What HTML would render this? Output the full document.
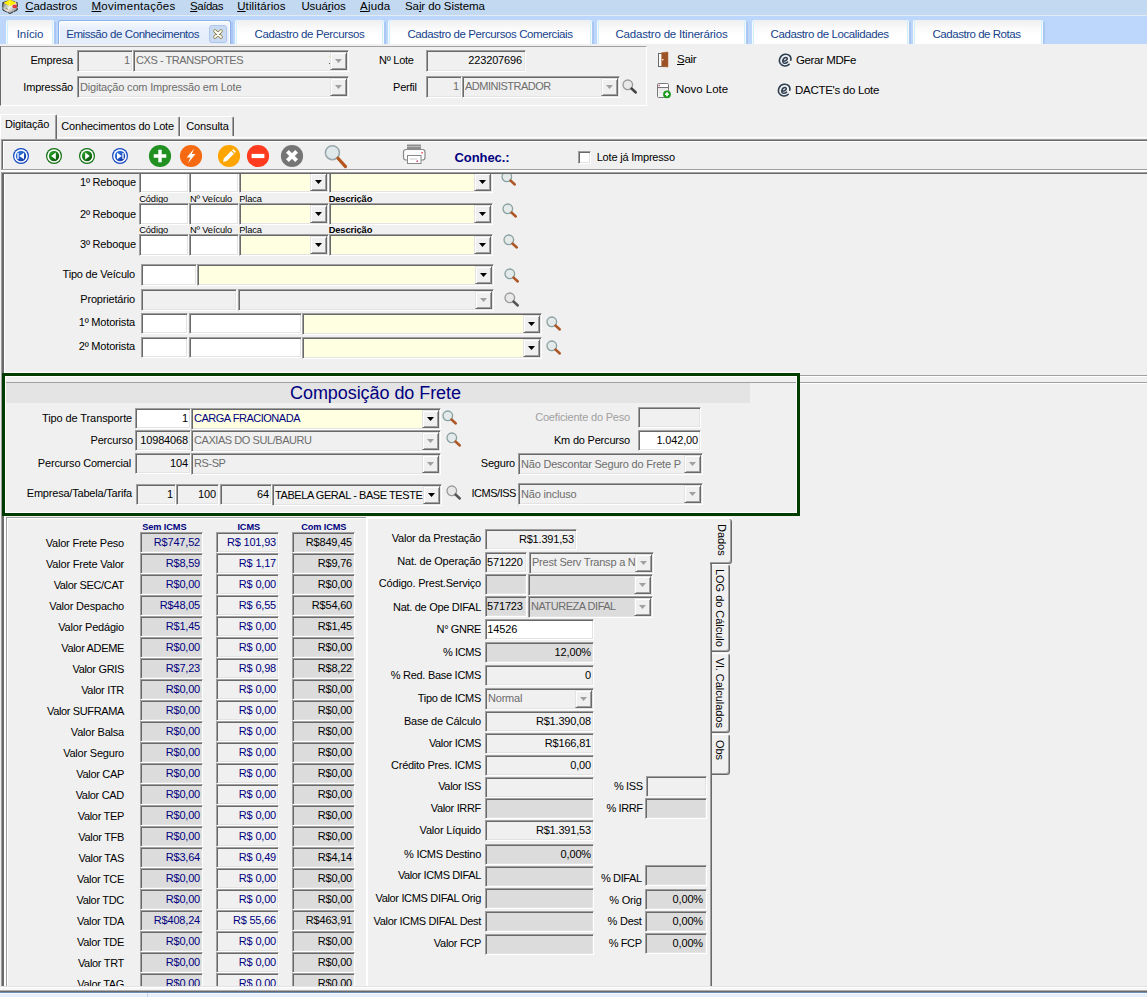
<!DOCTYPE html><html><head><meta charset="utf-8"><title>Emissão de Conhecimentos</title><style>
*{box-sizing:border-box;margin:0;padding:0}
html,body{width:1147px;height:997px;overflow:hidden;background:#f0f0f0;font-family:"Liberation Sans",sans-serif;font-size:11px;color:#000}
.a{position:absolute;white-space:nowrap;overflow:hidden}
.t{position:absolute;white-space:nowrap;line-height:14px;height:14px}
.r{text-align:right}
.bx{position:absolute;white-space:nowrap;overflow:hidden;border-top:1px solid #a0a0a0;border-left:1px solid #a0a0a0;border-right:1px solid #fff;border-bottom:1px solid #fff;box-shadow:inset 1px 1px 0 #696969,inset -1px -1px 0 #e3e3e3;background:#f0f0f0;padding:0 4px 0 4px}
.bx span{position:absolute;top:2px;line-height:14px;height:14px}
.dd{position:absolute;width:17px;background:#f0f0f0;border-top:1px solid #e3e3e3;border-left:1px solid #e3e3e3;border-right:1px solid #696969;border-bottom:1px solid #696969;box-shadow:inset 1px 1px 0 #fff,inset -1px -1px 0 #a0a0a0}
.dd:after{content:"";position:absolute;left:4px;top:6px;width:7px;height:4px;background:#000;clip-path:polygon(0 0,100% 0,50% 100%)}
.dd.dis:after{background:#a0a0a0}
.navy{color:#000080}
.g{color:#6d6d6d}
</style></head><body>
<div class="a" style="left:0;top:0;width:1147px;height:15px;background:#c3d9f1"></div>
<div class="a" style="left:0;top:15px;width:1147px;height:1px;background:#e2eaf4"></div>
<div class="a" style="left:0;top:16px;width:1147px;height:28px;background:#bdd7fc"></div>
<svg class="a" style="left:2px;top:0" width="16" height="14" viewBox="0 0 16 14"><defs><linearGradient id="ai" x1="0" y1="0" x2="1" y2="1"><stop offset="0" stop-color="#5a5a5a"/><stop offset="0.500" stop-color="#f2f2f2"/><stop offset="1" stop-color="#6a6a6a"/></linearGradient></defs><path d="M0.800 2.600 L8 0.400 L15.200 2.600 L15.200 10 L8 13.500 L0.800 10Z" fill="url(#ai)" stroke="#1a1a1a" stroke-width="0.900" stroke-dasharray="6 0.800"/><path d="M1.600 2.800 L8 -0.400 L14.600 2.800 L8 6.200Z" fill="#ffee00"/><path d="M7.700 1 V6" stroke="#f8f8c0" stroke-width="0.600"/><rect x="10.600" y="4.800" width="4.200" height="3.200" fill="#e23a3a"/><rect x="3.400" y="7.800" width="2" height="0.900" fill="#3cc43c"/><rect x="4.200" y="8.800" width="1.600" height="0.800" fill="#e05050"/></svg>
<div class="t" style="left:25.3px;top:-1px;font-size:11.5px;letter-spacing:-0.07px"><u>C</u>adastros</div>
<div class="t" style="left:91.5px;top:-1px;font-size:11.5px;letter-spacing:0.27px"><u>M</u>ovimentações</div>
<div class="t" style="left:190.1px;top:-1px;font-size:11.5px;letter-spacing:-0.48px"><u>S</u>aídas</div>
<div class="t" style="left:237.2px;top:-1px;font-size:11.5px;letter-spacing:0.11px"><u>U</u>tilitários</div>
<div class="t" style="left:301.4px;top:-1px;font-size:11.5px;letter-spacing:-0.15px">Usuá<u>r</u>ios</div>
<div class="t" style="left:360px;top:-1px;font-size:11.5px;letter-spacing:0.2px"><u>A</u>juda</div>
<div class="t" style="left:405px;top:-1px;font-size:11.5px;letter-spacing:-0.1px">Sa<u>i</u>r do Sistema</div>
<div class="a" style="left:6px;top:20px;width:48px;height:24px;border-radius:3px 3px 0 0;background:linear-gradient(#efefef,#fafafa 35%,#fff 60%);box-shadow:inset 1px 0 0 #f6f8fa,inset -1px 0 0 #f6f8fa,inset 2px 0 0 #cdf1ff,inset -2px 0 0 #cdf1ff"><div class="t" style="left:0px;width:100%;text-align:center;top:7px;color:#15428b;font-size:11.5px;letter-spacing:-0.167px">Início</div></div>
<div class="a" style="left:54px;top:22px;width:2px;height:22px;background:#a9c7f2"></div>
<div class="a" style="left:58px;top:20px;width:173px;height:24px;border:1px solid #8db2ea;border-bottom:none;border-radius:3px 3px 0 0;background:linear-gradient(#f8fbff,#e9f0fc 30%,#e4ecfa);box-shadow:inset 1px 1px 0 #fff,inset -1px 0 0 #fff"><div class="t" style="left:7.2px;top:6px;color:#15428b;font-size:11.5px;letter-spacing:-0.425px">Emissão de Conhecimentos</div><div class="a" style="left:150px;top:4px;width:18px;height:18px;border:1px solid #adc6ec;border-radius:3px;background:#c9daf2"></div><svg class="a" style="left:153px;top:7px" width="12" height="12" viewBox="0 0 12 12"><path d="M3 3 L9 9 M9 3 L3 9" stroke="#8a7a3a" stroke-width="3.4" stroke-linecap="round"/><path d="M3 3 L9 9 M9 3 L3 9" stroke="#fff" stroke-width="1.800" stroke-linecap="round"/></svg></div>
<div class="a" style="left:231px;top:22px;width:2px;height:22px;background:#a9c7f2"></div>
<div class="a" style="left:235px;top:20px;width:149px;height:24px;border-radius:3px 3px 0 0;background:linear-gradient(#efefef,#fafafa 35%,#fff 60%);box-shadow:inset 1px 0 0 #f6f8fa,inset -1px 0 0 #f6f8fa,inset 2px 0 0 #cdf1ff,inset -2px 0 0 #cdf1ff"><div class="t" style="left:0px;width:100%;text-align:center;top:7px;color:#15428b;font-size:11.5px;letter-spacing:-0.362px">Cadastro de Percursos</div></div>
<div class="a" style="left:384px;top:22px;width:2px;height:22px;background:#a9c7f2"></div>
<div class="a" style="left:388px;top:20px;width:204px;height:24px;border-radius:3px 3px 0 0;background:linear-gradient(#efefef,#fafafa 35%,#fff 60%);box-shadow:inset 1px 0 0 #f6f8fa,inset -1px 0 0 #f6f8fa,inset 2px 0 0 #cdf1ff,inset -2px 0 0 #cdf1ff"><div class="t" style="left:0px;width:100%;text-align:center;top:7px;color:#15428b;font-size:11.5px;letter-spacing:-0.416px">Cadastro de Percursos Comerciais</div></div>
<div class="a" style="left:592px;top:22px;width:2px;height:22px;background:#a9c7f2"></div>
<div class="a" style="left:597px;top:20px;width:149px;height:24px;border-radius:3px 3px 0 0;background:linear-gradient(#efefef,#fafafa 35%,#fff 60%);box-shadow:inset 1px 0 0 #f6f8fa,inset -1px 0 0 #f6f8fa,inset 2px 0 0 #cdf1ff,inset -2px 0 0 #cdf1ff"><div class="t" style="left:0px;width:100%;text-align:center;top:7px;color:#15428b;font-size:11.5px;letter-spacing:-0.187px">Cadastro de Itinerários</div></div>
<div class="a" style="left:746px;top:22px;width:2px;height:22px;background:#a9c7f2"></div>
<div class="a" style="left:752px;top:20px;width:157px;height:24px;border-radius:3px 3px 0 0;background:linear-gradient(#efefef,#fafafa 35%,#fff 60%);box-shadow:inset 1px 0 0 #f6f8fa,inset -1px 0 0 #f6f8fa,inset 2px 0 0 #cdf1ff,inset -2px 0 0 #cdf1ff"><div class="t" style="left:-1px;width:100%;text-align:center;top:7px;color:#15428b;font-size:11.5px;letter-spacing:-0.4px">Cadastro de Localidades</div></div>
<div class="a" style="left:909px;top:22px;width:2px;height:22px;background:#a9c7f2"></div>
<div class="a" style="left:913px;top:20px;width:130px;height:24px;border-radius:3px 3px 0 0;background:linear-gradient(#efefef,#fafafa 35%,#fff 60%);box-shadow:inset 1px 0 0 #f6f8fa,inset -1px 0 0 #f6f8fa,inset 2px 0 0 #cdf1ff,inset -2px 0 0 #cdf1ff"><div class="t" style="left:-1.5px;width:100%;text-align:center;top:7px;color:#15428b;font-size:11.5px;letter-spacing:-0.465px">Cadastro de Rotas</div></div>
<div class="a" style="left:1043px;top:22px;width:2px;height:22px;background:#a9c7f2"></div>
<div class="a" style="left:0;top:44px;width:1147px;height:942px;background:#f0f0f0"></div>
<div class="a" style="left:0;top:46px;width:647px;height:60px;border-top:1px solid #a0a0a0;border-left:1px solid #696969;border-right:1px solid #fff;border-bottom:1px solid #fff"></div>
<div class="t " style="top:53px;left:-327px;width:400px;text-align:right;letter-spacing:-0.2px;">Empresa</div>
<div class="bx" style="left:77px;top:50px;width:56px;height:22px;background:#f0f0f0;"><span style="right:2px;color:#6d6d6d;margin-top:0px;letter-spacing:-0.15px">1</span></div>
<div class="bx" style="left:133px;top:50px;width:216px;height:22px;background:#f0f0f0;"><span style="left:2px;color:#6d6d6d;margin-top:0px;letter-spacing:-0.44px">CXS - TRANSPORTES</span></div>
<div class="dd dis" style="left:330px;top:52px;height:18px"></div>
<div class="a" style="left:329px;top:56px;width:1px;height:1px;background:#f3d9a4"></div><div class="a" style="left:329px;top:63px;width:1px;height:1px;background:#555"></div>
<div class="t " style="top:80px;left:-327px;width:400px;text-align:right;letter-spacing:-0.19px;">Impressão</div>
<div class="bx" style="left:77px;top:76px;width:272px;height:22px;background:#f0f0f0;"><span style="left:2px;color:#6d6d6d;margin-top:1px;letter-spacing:-0.18px">Digitação com Impressão em Lote</span></div>
<div class="dd dis" style="left:330px;top:78px;height:18px"></div>
<div class="t " style="top:53px;left:379px;letter-spacing:-0.25px;">Nº Lote</div>
<div class="bx" style="left:426px;top:50px;width:100px;height:22px;background:#f0f0f0;"><span style="right:3px;color:#000;margin-top:0px;letter-spacing:-0.15px">223207696</span></div>
<div class="t " style="top:80px;left:393px;letter-spacing:-0.21px;">Perfil</div>
<div class="bx" style="left:426px;top:76px;width:36px;height:22px;background:#f0f0f0;"><span style="right:2px;color:#6d6d6d;margin-top:0px;letter-spacing:-0.15px">1</span></div>
<div class="bx" style="left:462px;top:76px;width:158px;height:22px;background:#f0f0f0;"><span style="left:2px;color:#6d6d6d;margin-top:0px;letter-spacing:-0.5px">ADMINISTRADOR</span></div>
<div class="dd dis" style="left:601px;top:78px;height:18px"></div>
<svg class="a" style="left:621px;top:78px" width="17.0" height="17.0" viewBox="0 0 17 17"><circle cx="6.800" cy="6.800" r="4.800" fill="#e8e8e8" stroke="#9a9a9a" stroke-width="1.300"/><path d="M10.500 10.500 L14.800 14.500" stroke="#444" stroke-width="2.500" stroke-linecap="round"/></svg>
<svg class="a" style="left:657px;top:51px" width="12" height="17" viewBox="0 0 12 17"><rect x="1.5" y="2.5" width="6" height="13" fill="#fff" stroke="#6a6a6a"/><path d="M4.6 1.6 L11 1 L11 16 L4.6 15.6Z" fill="#9c5226"/><path d="M4.6 1.6 L11 1 L11 16 L4.6 15.6Z" fill="none" stroke="#b06a3c" stroke-width="0.5"/><circle cx="5.8" cy="8.8" r="0.8" fill="#fff"/></svg>
<div class="t " style="top:52px;left:677px;letter-spacing:-0.24px;font-size:11.5px;letter-spacing:-0.3px"><u>S</u>air</div>
<svg class="a" style="left:656px;top:82px" width="16" height="17" viewBox="0 0 16 17"><rect x="1.5" y="1.5" width="11" height="14" rx="1" fill="#f4f4f4" stroke="#7a7a7a"/><rect x="2.2" y="2.2" width="9.6" height="3" fill="#fff"/><rect x="2.6" y="2.6" width="1" height="1.6" fill="#c2185b"/><path d="M2 5.6 H12" stroke="#555" stroke-width="0.9"/><path d="M3 8 H9 M3 10.500 H7" stroke="#ddd" stroke-width="0.8"/><circle cx="11" cy="12.3" r="3.9" fill="#1e9a1e"/><path d="M11 10.300 V14.300 M9 12.300 H13" stroke="#fff" stroke-width="1.6"/></svg>
<div class="t " style="top:82px;left:676px;letter-spacing:-0.23px;font-size:11.5px;letter-spacing:-0.05px">Novo Lote</div>
<svg class="a" style="left:778px;top:53px" width="14" height="14" viewBox="0 0 14 14"><path d="M11.200 11.300 C9 13.800 4.200 13.600 2.200 10.400 C0.300 7.200 2.200 2 6.800 1.300 C10.800 0.700 13.600 3.600 12.800 7.200" fill="none" stroke="#2c3e50" stroke-width="1.600" stroke-linecap="round"/><path d="M4.800 8.100 C7.500 8.200 9.600 6.800 9.300 5.300 C9 3.900 6.600 4.100 5.400 6 C4.200 7.900 4.600 10.200 6.600 10.300 C8 10.400 9 9.700 9.600 9" fill="none" stroke="#2c3e50" stroke-width="1.500" stroke-linecap="round"/></svg>
<div class="t " style="top:53px;left:796px;letter-spacing:-0.29px;font-size:11.5px;letter-spacing:-0.39px">Gerar MDFe</div>
<svg class="a" style="left:777px;top:83px" width="14" height="14" viewBox="0 0 14 14"><path d="M11.200 11.300 C9 13.800 4.200 13.600 2.200 10.400 C0.300 7.200 2.200 2 6.800 1.300 C10.800 0.700 13.600 3.600 12.800 7.200" fill="none" stroke="#2c3e50" stroke-width="1.600" stroke-linecap="round"/><path d="M4.800 8.100 C7.500 8.200 9.600 6.800 9.300 5.300 C9 3.900 6.600 4.100 5.400 6 C4.200 7.900 4.600 10.200 6.600 10.300 C8 10.400 9 9.700 9.600 9" fill="none" stroke="#2c3e50" stroke-width="1.500" stroke-linecap="round"/></svg>
<div class="t " style="top:83px;left:795px;letter-spacing:-0.29px;font-size:11.5px;letter-spacing:-0.29px">DACTE's do Lote</div>
<div class="a" style="left:57px;top:137px;width:1090px;height:1px;background:#fff"></div>
<div class="a" style="left:0px;top:114px;width:57px;height:25px;border-top:1px solid #fff;border-left:1px solid #fff;border-right:1px solid #696969;border-radius:2px 2px 0 0;background:#f0f0f0;box-shadow:inset -1px 0 0 #a0a0a0"></div>
<div class="t " style="top:117px;left:5px;letter-spacing:-0.19px;letter-spacing:-0.2px">Digitação</div>
<div class="a" style="left:57px;top:116px;width:123px;height:20px;border-top:1px solid #fff;border-right:1px solid #696969;border-radius:0 2px 0 0;box-shadow:inset -1px 0 0 #a0a0a0"></div>
<div class="t " style="top:119px;left:61.3px;letter-spacing:-0.18px;letter-spacing:-0.17px">Conhecimentos do Lote</div>
<div class="a" style="left:180px;top:116px;width:54px;height:20px;border-top:1px solid #fff;border-left:1px solid #fff;border-right:1px solid #696969;border-radius:2px 2px 0 0;box-shadow:inset -1px 0 0 #a0a0a0"></div>
<div class="t " style="top:119px;left:186.2px;letter-spacing:-0.19px;letter-spacing:-0.1px">Consulta</div>
<div class="a" style="left:1px;top:139px;width:1146px;height:1px;background:#a0a0a0"></div>
<div class="a" style="left:2px;top:140px;width:1145px;height:1px;background:#696969"></div>
<div class="a" style="left:3px;top:141px;width:1144px;height:1px;background:#fff"></div>
<div class="a" style="left:1px;top:139px;width:1px;height:31px;background:#a0a0a0"></div>
<div class="a" style="left:2px;top:140px;width:1px;height:29px;background:#696969"></div>
<div class="a" style="left:3px;top:141px;width:1px;height:28px;background:#fff"></div>
<div class="a" style="left:2px;top:169px;width:1145px;height:1px;background:#a0a0a0"></div>
<div class="a" style="left:1px;top:170px;width:1146px;height:2px;background:#fff"></div>
<svg class="a" style="left:12px;top:146.6px" width="18" height="18" viewBox="-9 -9 18 18"><defs><linearGradient id="g1" x1="0" y1="0" x2="1" y2="1"><stop offset="0" stop-color="#3a86f0"/><stop offset="1" stop-color="#0a2a9a"/></linearGradient></defs><circle r="8" fill="#1448c0"/><circle r="6.800" fill="#fff"/><circle r="5.200" fill="url(#g1)"/><path d="M-3 -3 V3" stroke="#fff" stroke-width="1.3"/><path d="M3 -3.2 L-1.800 0 L3 3.2Z" fill="#fff"/></svg>
<svg class="a" style="left:45px;top:146.6px" width="18" height="18" viewBox="-9 -9 18 18"><defs><linearGradient id="g2" x1="0" y1="0" x2="1" y2="1"><stop offset="0" stop-color="#2fae2f"/><stop offset="1" stop-color="#064a06"/></linearGradient></defs><circle r="8" fill="#0f6f0f"/><circle r="6.800" fill="#fff"/><circle r="5.200" fill="url(#g2)"/><path d="M1.800 -3.4 L-2.800 0 L1.800 3.4Z" fill="#fff"/></svg>
<svg class="a" style="left:78px;top:146.6px" width="18" height="18" viewBox="-9 -9 18 18"><defs><linearGradient id="g3" x1="0" y1="0" x2="1" y2="1"><stop offset="0" stop-color="#2fae2f"/><stop offset="1" stop-color="#064a06"/></linearGradient></defs><circle r="8" fill="#0f6f0f"/><circle r="6.800" fill="#fff"/><circle r="5.200" fill="url(#g3)"/><path d="M-1.800 -3.4 L2.800 0 L-1.800 3.4Z" fill="#fff"/></svg>
<svg class="a" style="left:111px;top:146.6px" width="18" height="18" viewBox="-9 -9 18 18"><defs><linearGradient id="g4" x1="0" y1="0" x2="1" y2="1"><stop offset="0" stop-color="#3a86f0"/><stop offset="1" stop-color="#0a2a9a"/></linearGradient></defs><circle r="8" fill="#1448c0"/><circle r="6.800" fill="#fff"/><circle r="5.200" fill="url(#g4)"/><path d="M3 -3 V3" stroke="#fff" stroke-width="1.3"/><path d="M-3 -3.2 L1.800 0 L-3 3.2Z" fill="#fff"/></svg>
<svg class="a" style="left:148px;top:144px" width="24" height="24" viewBox="-12 -12 24 24"><circle r="11.100" fill="#229122"/><path d="M0 -6.300 V6.300 M-6.300 0 H6.300" stroke="#fff" stroke-width="3.4"/></svg>
<svg class="a" style="left:179px;top:144px" width="24" height="24" viewBox="-12 -12 24 24"><circle r="11.100" fill="#f56a10"/><path d="M3 -7.300 L-4.300 1.500 H-0.600 L-3 7.300 L4.400 -2 H0.800Z" fill="#fff"/></svg>
<svg class="a" style="left:217px;top:144px" width="24" height="24" viewBox="-12 -12 24 24"><circle r="11.100" fill="#ffa500"/><path d="M-6 6 L-5 2.200 L2.200 -5 L5 -2.200 L-2.200 5Z" fill="#fff"/><path d="M3 -5.800 L4.200 -7 L7 -4.200 L5.800 -3Z" fill="#fff"/></svg>
<svg class="a" style="left:246px;top:144px" width="24" height="24" viewBox="-12 -12 24 24"><circle r="11.100" fill="#ff3b1f"/><path d="M-6.400 0 H6.400" stroke="#fff" stroke-width="4.2"/></svg>
<svg class="a" style="left:280px;top:144px" width="24" height="24" viewBox="-12 -12 24 24"><circle r="11.100" fill="#757575"/><path d="M-4.600 -4.600 L4.600 4.600 M4.600 -4.600 L-4.600 4.600" stroke="#fff" stroke-width="4"/></svg>
<svg class="a" style="left:322px;top:143px" width="28" height="28" viewBox="0 0 28 28"><circle cx="10.400" cy="9.700" r="7" fill="#dfe8ea" stroke="#9aa9ad" stroke-width="1.600"/><path d="M16 15.300 L23.500 23.600" stroke="#b5561e" stroke-width="3.200" stroke-linecap="round"/></svg>
<svg class="a" style="left:402px;top:143px" width="25" height="22" viewBox="0 0 25 22"><rect x="5" y="1.500" width="14" height="6" fill="#8e8e8e"/><path d="M5 3.500 H19" stroke="#b8b8b8"/><rect x="1.500" y="6.500" width="21.500" height="10.500" rx="2.500" fill="#fbfbfb" stroke="#888" stroke-width="1.200"/><rect x="5.500" y="12.500" width="13.500" height="8" fill="#fff" stroke="#888"/><path d="M8 16 H15" stroke="#bbb" stroke-width="0.800"/><rect x="19.300" y="9" width="1.600" height="1.400" fill="#e55"/><rect x="14.500" y="17.500" width="1.500" height="1.500" fill="#d46"/></svg>
<div class="t " style="top:150px;left:454.5px;letter-spacing:-0.19px;font-weight:bold;color:#000080;font-size:13px;letter-spacing:-0.08px;top:149.500px;height:15px;line-height:15px">Conhec.:</div>
<div class="a" style="left:578px;top:151px;width:13px;height:13px;border-top:1px solid #a0a0a0;border-left:1px solid #a0a0a0;border-right:1px solid #fff;border-bottom:1px solid #fff;box-shadow:inset 1px 1px 0 #696969,inset -1px -1px 0 #e3e3e3;background:#fff"></div>
<div class="t " style="top:150px;left:596.7px;letter-spacing:-0.19px;letter-spacing:-0.2px">Lote já Impresso</div>
<div class="t " style="top:175px;left:-264px;width:400px;text-align:right;letter-spacing:-0.18px;">1º Reboque</div>
<div class="bx" style="left:139px;top:171px;width:50px;height:22px;background:#fff;"></div>
<div class="bx" style="left:189px;top:171px;width:50px;height:22px;background:#fff;"></div>
<div class="bx" style="left:239px;top:171px;width:90px;height:22px;background:#ffffe1;"></div>
<div class="dd" style="left:310px;top:173px;height:18px"></div>
<div class="bx" style="left:329px;top:171px;width:164px;height:22px;background:#ffffe1;"></div>
<div class="dd" style="left:474px;top:173px;height:18px"></div>
<svg class="a" style="left:500px;top:170.2px" width="17.0" height="17.0" viewBox="0 0 17 17"><circle cx="6.800" cy="6.800" r="4.800" fill="#e4eaea" stroke="#8aa0a0" stroke-width="1.300"/><path d="M10.500 10.500 L14.800 14.500" stroke="#ad5826" stroke-width="2.500" stroke-linecap="round"/></svg>
<div class="t " style="top:192px;left:139.2px;letter-spacing:-0.21px;font-size:9.3px;letter-spacing:-0.1px">Código</div>
<div class="t " style="top:192px;left:189.9px;letter-spacing:-0.22px;font-size:9.3px;letter-spacing:-0.1px">Nº Veículo</div>
<div class="t " style="top:192px;left:239.2px;letter-spacing:-0.22px;font-size:9.3px;letter-spacing:-0.1px">Placa</div>
<div class="t " style="top:192px;left:328.7px;letter-spacing:-0.19px;font-size:9.3px;letter-spacing:-0.1px;font-weight:bold">Descrição</div>
<div class="t " style="top:223px;left:139.2px;letter-spacing:-0.21px;font-size:9.3px;letter-spacing:-0.1px">Código</div>
<div class="t " style="top:223px;left:189.9px;letter-spacing:-0.22px;font-size:9.3px;letter-spacing:-0.1px">Nº Veículo</div>
<div class="t " style="top:223px;left:239.2px;letter-spacing:-0.22px;font-size:9.3px;letter-spacing:-0.1px">Placa</div>
<div class="t " style="top:223px;left:328.7px;letter-spacing:-0.19px;font-size:9.3px;letter-spacing:-0.1px;font-weight:bold">Descrição</div>
<div class="t " style="top:207px;left:-264px;width:400px;text-align:right;letter-spacing:-0.18px;">2º Reboque</div>
<div class="bx" style="left:139px;top:203px;width:50px;height:22px;background:#fff;"></div>
<div class="bx" style="left:189px;top:203px;width:50px;height:22px;background:#fff;"></div>
<div class="bx" style="left:239px;top:203px;width:90px;height:22px;background:#ffffe1;"></div>
<div class="dd" style="left:310px;top:205px;height:18px"></div>
<div class="bx" style="left:329px;top:203px;width:164px;height:22px;background:#ffffe1;"></div>
<div class="dd" style="left:474px;top:205px;height:18px"></div>
<svg class="a" style="left:500.9px;top:202px" width="17.0" height="17.0" viewBox="0 0 17 17"><circle cx="6.800" cy="6.800" r="4.800" fill="#e4eaea" stroke="#8aa0a0" stroke-width="1.300"/><path d="M10.500 10.500 L14.800 14.500" stroke="#ad5826" stroke-width="2.500" stroke-linecap="round"/></svg>
<div class="t " style="top:237px;left:-264px;width:400px;text-align:right;letter-spacing:-0.18px;">3º Reboque</div>
<div class="bx" style="left:139px;top:234px;width:50px;height:22px;background:#fff;"></div>
<div class="bx" style="left:189px;top:234px;width:50px;height:22px;background:#fff;"></div>
<div class="bx" style="left:239px;top:234px;width:90px;height:22px;background:#ffffe1;"></div>
<div class="dd" style="left:310px;top:236px;height:18px"></div>
<div class="bx" style="left:329px;top:234px;width:164px;height:22px;background:#ffffe1;"></div>
<div class="dd" style="left:474px;top:236px;height:18px"></div>
<svg class="a" style="left:501.9px;top:233.3px" width="17.0" height="17.0" viewBox="0 0 17 17"><circle cx="6.800" cy="6.800" r="4.800" fill="#e4eaea" stroke="#8aa0a0" stroke-width="1.300"/><path d="M10.500 10.500 L14.800 14.500" stroke="#ad5826" stroke-width="2.500" stroke-linecap="round"/></svg>
<div class="a" style="left:4px;top:169px;width:1143px;height:3px;background:#f0f0f0"></div>
<div class="a" style="left:2px;top:169px;width:1145px;height:1px;background:#a0a0a0"></div>
<div class="a" style="left:1px;top:170px;width:1146px;height:2px;background:#fff"></div>
<div class="a" style="left:1px;top:172px;width:1146px;height:1px;background:#a0a0a0"></div>
<div class="a" style="left:2px;top:173px;width:1145px;height:1px;background:#696969"></div>
<div class="a" style="left:1px;top:172px;width:1px;height:814px;background:#a0a0a0"></div>
<div class="a" style="left:2px;top:173px;width:2px;height:813px;background:#696969"></div>
<div class="a" style="left:4px;top:174px;width:1px;height:198px;background:#fff"></div>
<div class="a" style="left:4px;top:372px;width:796px;height:1px;background:#fff"></div>
<div class="t " style="top:267px;left:-265px;width:400px;text-align:right;letter-spacing:-0.2px;">Tipo de Veículo</div>
<div class="bx" style="left:141px;top:264px;width:56px;height:22px;background:#fff;"></div>
<div class="bx" style="left:197px;top:264px;width:297px;height:22px;background:#ffffe1;"></div>
<div class="dd" style="left:475px;top:266px;height:18px"></div>
<svg class="a" style="left:503.1px;top:266.5px" width="17.0" height="17.0" viewBox="0 0 17 17"><circle cx="6.800" cy="6.800" r="4.800" fill="#e4eaea" stroke="#8aa0a0" stroke-width="1.300"/><path d="M10.500 10.500 L14.800 14.500" stroke="#ad5826" stroke-width="2.500" stroke-linecap="round"/></svg>
<div class="t " style="top:292px;left:-265px;width:400px;text-align:right;letter-spacing:-0.18px;">Proprietário</div>
<div class="bx" style="left:141px;top:289px;width:96px;height:22px;background:#f0f0f0;"></div>
<div class="bx" style="left:238px;top:289px;width:256px;height:22px;background:#f0f0f0;"></div>
<div class="dd dis" style="left:475px;top:291px;height:18px"></div>
<svg class="a" style="left:503.1px;top:291.4px" width="17.0" height="17.0" viewBox="0 0 17 17"><circle cx="6.800" cy="6.800" r="4.800" fill="#e8e8e8" stroke="#9a9a9a" stroke-width="1.300"/><path d="M10.500 10.500 L14.800 14.500" stroke="#555" stroke-width="2.500" stroke-linecap="round"/></svg>
<div class="t " style="top:315px;left:-265px;width:400px;text-align:right;letter-spacing:-0.18px;">1º Motorista</div>
<div class="bx" style="left:141px;top:313px;width:47px;height:21px;background:#fff;"></div>
<div class="bx" style="left:189px;top:313px;width:113px;height:21px;background:#fff;"></div>
<div class="bx" style="left:302px;top:313px;width:240px;height:22px;background:#ffffe1;"></div>
<div class="dd" style="left:523px;top:315px;height:18px"></div>
<svg class="a" style="left:544.8px;top:315.2px" width="17.0" height="17.0" viewBox="0 0 17 17"><circle cx="6.800" cy="6.800" r="4.800" fill="#e4eaea" stroke="#8aa0a0" stroke-width="1.300"/><path d="M10.500 10.500 L14.800 14.500" stroke="#ad5826" stroke-width="2.500" stroke-linecap="round"/></svg>
<div class="t " style="top:339px;left:-265px;width:400px;text-align:right;letter-spacing:-0.18px;">2º Motorista</div>
<div class="bx" style="left:141px;top:337px;width:47px;height:21px;background:#fff;"></div>
<div class="bx" style="left:189px;top:337px;width:113px;height:21px;background:#fff;"></div>
<div class="bx" style="left:302px;top:337px;width:240px;height:22px;background:#ffffe1;"></div>
<div class="dd" style="left:523px;top:339px;height:18px"></div>
<svg class="a" style="left:544.8px;top:339.1px" width="17.0" height="17.0" viewBox="0 0 17 17"><circle cx="6.800" cy="6.800" r="4.800" fill="#e4eaea" stroke="#8aa0a0" stroke-width="1.300"/><path d="M10.500 10.500 L14.800 14.500" stroke="#ad5826" stroke-width="2.500" stroke-linecap="round"/></svg>
<div class="a" style="left:800px;top:375px;width:347px;height:1px;background:#a0a0a0"></div>
<div class="a" style="left:800px;top:376px;width:347px;height:1px;background:#fff"></div>
<div class="a" style="left:5px;top:382px;width:1142px;height:1px;background:#a0a0a0"></div>
<div class="a" style="left:800px;top:383px;width:347px;height:1px;background:#fff"></div>
<div class="a" style="left:5px;top:383px;width:745px;height:20px;background:#e4e4e4"></div>
<div class="a" style="left:2px;top:373px;width:798px;height:143px;border:3px solid #003c00;box-shadow:inset 1px 1px 0 #fff,inset -1px -1px 0 #fff"></div>
<div class="t " style="top:386px;left:290px;letter-spacing:-0.19px;font-size:18px;color:#000080;line-height:20px;height:20px;top:382.500px;letter-spacing:-0.06px">Composição do Frete</div>
<div class="t" style="left:42px;top:411px;width:90px;overflow:hidden;letter-spacing:-0.1px">Tipo de Transporte</div>
<div class="bx" style="left:135px;top:408px;width:56px;height:21px;background:#fff;"><span style="right:2px;color:#000;margin-top:0px;letter-spacing:-0.15px">1</span></div>
<div class="bx" style="left:191px;top:408px;width:250px;height:22px;background:#ffffe1;"><span style="left:2px;color:#000080;margin-top:0px;letter-spacing:-0.48px">CARGA FRACIONADA</span></div>
<div class="dd" style="left:422px;top:410px;height:18px"></div>
<svg class="a" style="left:440.9px;top:408.9px" width="17.0" height="17.0" viewBox="0 0 17 17"><circle cx="6.800" cy="6.800" r="4.800" fill="#e4eaea" stroke="#8aa0a0" stroke-width="1.300"/><path d="M10.500 10.500 L14.800 14.500" stroke="#ad5826" stroke-width="2.500" stroke-linecap="round"/></svg>
<div class="t " style="top:433px;left:-267px;width:400px;text-align:right;letter-spacing:-0.19px;">Percurso</div>
<div class="bx" style="left:135px;top:430px;width:56px;height:21px;background:#f0f0f0;"><span style="right:2px;color:#000;margin-top:0px;letter-spacing:-0.15px">10984068</span></div>
<div class="bx" style="left:191px;top:430px;width:250px;height:22px;background:#f0f0f0;"><span style="left:2px;color:#6d6d6d;margin-top:0px;letter-spacing:-0.44px">CAXIAS DO SUL/BAURU</span></div>
<div class="dd dis" style="left:422px;top:432px;height:18px"></div>
<svg class="a" style="left:444.9px;top:430.8px" width="17.0" height="17.0" viewBox="0 0 17 17"><circle cx="6.800" cy="6.800" r="4.800" fill="#e4eaea" stroke="#8aa0a0" stroke-width="1.300"/><path d="M10.500 10.500 L14.800 14.500" stroke="#ad5826" stroke-width="2.500" stroke-linecap="round"/></svg>
<div class="t " style="top:456px;left:-269px;width:400px;text-align:right;letter-spacing:-0.19px;">Percurso Comercial</div>
<div class="bx" style="left:135px;top:453px;width:56px;height:21px;background:#f0f0f0;"><span style="right:2px;color:#000;margin-top:0px;letter-spacing:-0.15px">104</span></div>
<div class="bx" style="left:191px;top:453px;width:250px;height:22px;background:#f0f0f0;"><span style="left:2px;color:#6d6d6d;margin-top:0px;letter-spacing:-0.43px">RS-SP</span></div>
<div class="dd dis" style="left:422px;top:455px;height:18px"></div>
<div class="t " style="top:486px;left:-268px;width:400px;text-align:right;letter-spacing:-0.2px;">Empresa/Tabela/Tarifa</div>
<div class="bx" style="left:136px;top:484px;width:40px;height:21px;background:#f0f0f0;"><span style="right:2px;color:#000;margin-top:0px;letter-spacing:-0.15px">1</span></div>
<div class="bx" style="left:176px;top:484px;width:43px;height:21px;background:#f0f0f0;"><span style="right:2px;color:#000;margin-top:0px;letter-spacing:-0.15px">100</span></div>
<div class="bx" style="left:220px;top:484px;width:52px;height:21px;background:#f0f0f0;"><span style="right:2px;color:#000;margin-top:0px;letter-spacing:-0.15px">64</span></div>
<div class="bx" style="left:272px;top:484px;width:170px;height:22px;background:#f0f0f0;"><span style="left:2px;color:#000;margin-top:1px;letter-spacing:-0.43px">TABELA GERAL - BASE TESTE</span></div>
<div class="dd" style="left:423px;top:486px;height:18px"></div>
<svg class="a" style="left:444.9px;top:484.2px" width="17.0" height="17.0" viewBox="0 0 17 17"><circle cx="6.800" cy="6.800" r="4.800" fill="#e8e8e8" stroke="#9a9a9a" stroke-width="1.300"/><path d="M10.500 10.500 L14.800 14.500" stroke="#555" stroke-width="2.500" stroke-linecap="round"/></svg>
<div class="t " style="top:410px;left:230px;width:400px;text-align:right;letter-spacing:-0.19px;color:#a0a0a0">Coeficiente do Peso</div>
<div class="bx" style="left:638px;top:407px;width:63px;height:21px;background:#f0f0f0;"></div>
<div class="t " style="top:433px;left:230px;width:400px;text-align:right;letter-spacing:-0.2px;">Km do Percurso</div>
<div class="bx" style="left:638px;top:430px;width:63px;height:21px;background:#fff;"><span style="right:2px;color:#000;margin-top:0px;letter-spacing:-0.15px">1.042,00</span></div>
<div class="t " style="top:456px;left:115px;width:400px;text-align:right;letter-spacing:-0.21px;">Seguro</div>
<div class="bx" style="left:518px;top:453px;width:185px;height:22px;background:#f0f0f0;"><span style="left:2px;color:#6d6d6d;margin-top:1px;letter-spacing:-0.21px">Não Descontar Seguro do Frete P</span></div>
<div class="dd dis" style="left:684px;top:455px;height:18px"></div>
<div class="t " style="top:486px;left:116px;width:400px;text-align:right;letter-spacing:-0.46px;">ICMS/ISS</div>
<div class="bx" style="left:518px;top:483px;width:185px;height:22px;background:#f0f0f0;"><span style="left:2px;color:#6d6d6d;margin-top:1px;letter-spacing:-0.18px">Não incluso</span></div>
<div class="dd dis" style="left:684px;top:485px;height:18px"></div>
<div class="a" style="left:4px;top:516px;width:2px;height:470px;background:#fff"></div>
<div class="a" style="left:6px;top:517px;width:360px;height:1px;background:#a0a0a0"></div>
<div class="a" style="left:6px;top:517px;width:1px;height:469px;background:#a0a0a0"></div>
<div class="a" style="left:7px;top:518px;width:359px;height:1px;background:#fff"></div>
<div class="a" style="left:7px;top:518px;width:1px;height:468px;background:#fff"></div>
<div class="a" style="left:366px;top:517px;width:1px;height:469px;background:#fff"></div>
<div class="a" style="left:367px;top:517px;width:365px;height:2px;background:#fff"></div>
<div class="a" style="left:367px;top:517px;width:1px;height:469px;background:#fff"></div>
<div class="a" style="left:710px;top:563px;width:1px;height:423px;background:#a0a0a0"></div>
<div class="a" style="left:711px;top:563px;width:1px;height:423px;background:#696969"></div>
<div class="t " style="top:519.7px;left:142.3px;letter-spacing:-0.37px;font-size:9.2px;font-weight:bold;color:#000080;letter-spacing:-0.1px;top:519.700px">Sem ICMS</div>
<div class="t " style="top:519.7px;left:237.4px;letter-spacing:-0.5px;font-size:9.2px;font-weight:bold;color:#000080;letter-spacing:-0.1px;top:519.700px">ICMS</div>
<div class="t " style="top:519.7px;left:301.2px;letter-spacing:-0.37px;font-size:9.2px;font-weight:bold;color:#000080;letter-spacing:-0.1px;top:519.700px">Com ICMS</div>
<div class="a" style="left:8px;top:519px;width:358px;height:467px">
<div class="t" style="left:0;width:116px;text-align:right;top:17px;letter-spacing:-0.22px">Valor Frete Peso</div>
<div class="bx" style="left:132px;top:13px;width:63px;height:21px;background:#dcdcdc"><span style="right:2px;color:#000080;letter-spacing:-0.19px">R$747,52</span></div>
<div class="bx" style="left:208px;top:13px;width:63px;height:21px;background:#f0f0f0"><span style="right:2px;color:#000080;letter-spacing:-0.19px">R$ 101,93</span></div>
<div class="bx" style="left:284px;top:13px;width:63px;height:21px;background:#dcdcdc"><span style="right:2px;color:#000;letter-spacing:-0.19px">R$849,45</span></div>
<div class="t" style="left:0;width:116px;text-align:right;top:38px;letter-spacing:-0.21px">Valor Frete Valor</div>
<div class="bx" style="left:132px;top:34px;width:63px;height:21px;background:#dcdcdc"><span style="right:2px;color:#000080;letter-spacing:-0.21px">R$8,59</span></div>
<div class="bx" style="left:208px;top:34px;width:63px;height:21px;background:#f0f0f0"><span style="right:2px;color:#000080;letter-spacing:-0.2px">R$ 1,17</span></div>
<div class="bx" style="left:284px;top:34px;width:63px;height:21px;background:#dcdcdc"><span style="right:2px;color:#000;letter-spacing:-0.21px">R$9,76</span></div>
<div class="t" style="left:0;width:116px;text-align:right;top:59px;letter-spacing:-0.34px">Valor SEC/CAT</div>
<div class="bx" style="left:132px;top:55px;width:63px;height:21px;background:#dcdcdc"><span style="right:2px;color:#000080;letter-spacing:-0.21px">R$0,00</span></div>
<div class="bx" style="left:208px;top:55px;width:63px;height:21px;background:#f0f0f0"><span style="right:2px;color:#000080;letter-spacing:-0.2px">R$ 0,00</span></div>
<div class="bx" style="left:284px;top:55px;width:63px;height:21px;background:#dcdcdc"><span style="right:2px;color:#000;letter-spacing:-0.21px">R$0,00</span></div>
<div class="t" style="left:0;width:116px;text-align:right;top:80px;letter-spacing:-0.2px">Valor Despacho</div>
<div class="bx" style="left:132px;top:76px;width:63px;height:21px;background:#dcdcdc"><span style="right:2px;color:#000080;letter-spacing:-0.2px">R$48,05</span></div>
<div class="bx" style="left:208px;top:76px;width:63px;height:21px;background:#f0f0f0"><span style="right:2px;color:#000080;letter-spacing:-0.2px">R$ 6,55</span></div>
<div class="bx" style="left:284px;top:76px;width:63px;height:21px;background:#dcdcdc"><span style="right:2px;color:#000;letter-spacing:-0.2px">R$54,60</span></div>
<div class="t" style="left:0;width:116px;text-align:right;top:101px;letter-spacing:-0.2px">Valor Pedágio</div>
<div class="bx" style="left:132px;top:97px;width:63px;height:21px;background:#dcdcdc"><span style="right:2px;color:#000080;letter-spacing:-0.21px">R$1,45</span></div>
<div class="bx" style="left:208px;top:97px;width:63px;height:21px;background:#f0f0f0"><span style="right:2px;color:#000080;letter-spacing:-0.2px">R$ 0,00</span></div>
<div class="bx" style="left:284px;top:97px;width:63px;height:21px;background:#dcdcdc"><span style="right:2px;color:#000;letter-spacing:-0.21px">R$1,45</span></div>
<div class="t" style="left:0;width:116px;text-align:right;top:122px;letter-spacing:-0.34px">Valor ADEME</div>
<div class="bx" style="left:132px;top:118px;width:63px;height:21px;background:#dcdcdc"><span style="right:2px;color:#000080;letter-spacing:-0.21px">R$0,00</span></div>
<div class="bx" style="left:208px;top:118px;width:63px;height:21px;background:#f0f0f0"><span style="right:2px;color:#000080;letter-spacing:-0.2px">R$ 0,00</span></div>
<div class="bx" style="left:284px;top:118px;width:63px;height:21px;background:#dcdcdc"><span style="right:2px;color:#000;letter-spacing:-0.21px">R$0,00</span></div>
<div class="t" style="left:0;width:116px;text-align:right;top:143px;letter-spacing:-0.33px">Valor GRIS</div>
<div class="bx" style="left:132px;top:139px;width:63px;height:21px;background:#dcdcdc"><span style="right:2px;color:#000080;letter-spacing:-0.21px">R$7,23</span></div>
<div class="bx" style="left:208px;top:139px;width:63px;height:21px;background:#f0f0f0"><span style="right:2px;color:#000080;letter-spacing:-0.2px">R$ 0,98</span></div>
<div class="bx" style="left:284px;top:139px;width:63px;height:21px;background:#dcdcdc"><span style="right:2px;color:#000;letter-spacing:-0.21px">R$8,22</span></div>
<div class="t" style="left:0;width:116px;text-align:right;top:164px;letter-spacing:-0.31px">Valor ITR</div>
<div class="bx" style="left:132px;top:160px;width:63px;height:21px;background:#dcdcdc"><span style="right:2px;color:#000080;letter-spacing:-0.21px">R$0,00</span></div>
<div class="bx" style="left:208px;top:160px;width:63px;height:21px;background:#f0f0f0"><span style="right:2px;color:#000080;letter-spacing:-0.2px">R$ 0,00</span></div>
<div class="bx" style="left:284px;top:160px;width:63px;height:21px;background:#dcdcdc"><span style="right:2px;color:#000;letter-spacing:-0.21px">R$0,00</span></div>
<div class="t" style="left:0;width:116px;text-align:right;top:185px;letter-spacing:-0.37px">Valor SUFRAMA</div>
<div class="bx" style="left:132px;top:181px;width:63px;height:21px;background:#dcdcdc"><span style="right:2px;color:#000080;letter-spacing:-0.21px">R$0,00</span></div>
<div class="bx" style="left:208px;top:181px;width:63px;height:21px;background:#f0f0f0"><span style="right:2px;color:#000080;letter-spacing:-0.2px">R$ 0,00</span></div>
<div class="bx" style="left:284px;top:181px;width:63px;height:21px;background:#dcdcdc"><span style="right:2px;color:#000;letter-spacing:-0.21px">R$0,00</span></div>
<div class="t" style="left:0;width:116px;text-align:right;top:206px;letter-spacing:-0.21px">Valor Balsa</div>
<div class="bx" style="left:132px;top:202px;width:63px;height:21px;background:#dcdcdc"><span style="right:2px;color:#000080;letter-spacing:-0.21px">R$0,00</span></div>
<div class="bx" style="left:208px;top:202px;width:63px;height:21px;background:#f0f0f0"><span style="right:2px;color:#000080;letter-spacing:-0.2px">R$ 0,00</span></div>
<div class="bx" style="left:284px;top:202px;width:63px;height:21px;background:#dcdcdc"><span style="right:2px;color:#000;letter-spacing:-0.21px">R$0,00</span></div>
<div class="t" style="left:0;width:116px;text-align:right;top:227px;letter-spacing:-0.21px">Valor Seguro</div>
<div class="bx" style="left:132px;top:223px;width:63px;height:21px;background:#dcdcdc"><span style="right:2px;color:#000080;letter-spacing:-0.21px">R$0,00</span></div>
<div class="bx" style="left:208px;top:223px;width:63px;height:21px;background:#f0f0f0"><span style="right:2px;color:#000080;letter-spacing:-0.2px">R$ 0,00</span></div>
<div class="bx" style="left:284px;top:223px;width:63px;height:21px;background:#dcdcdc"><span style="right:2px;color:#000;letter-spacing:-0.21px">R$0,00</span></div>
<div class="t" style="left:0;width:116px;text-align:right;top:248px;letter-spacing:-0.31px">Valor CAP</div>
<div class="bx" style="left:132px;top:244px;width:63px;height:21px;background:#dcdcdc"><span style="right:2px;color:#000080;letter-spacing:-0.21px">R$0,00</span></div>
<div class="bx" style="left:208px;top:244px;width:63px;height:21px;background:#f0f0f0"><span style="right:2px;color:#000080;letter-spacing:-0.2px">R$ 0,00</span></div>
<div class="bx" style="left:284px;top:244px;width:63px;height:21px;background:#dcdcdc"><span style="right:2px;color:#000;letter-spacing:-0.21px">R$0,00</span></div>
<div class="t" style="left:0;width:116px;text-align:right;top:269px;letter-spacing:-0.31px">Valor CAD</div>
<div class="bx" style="left:132px;top:265px;width:63px;height:21px;background:#dcdcdc"><span style="right:2px;color:#000080;letter-spacing:-0.21px">R$0,00</span></div>
<div class="bx" style="left:208px;top:265px;width:63px;height:21px;background:#f0f0f0"><span style="right:2px;color:#000080;letter-spacing:-0.2px">R$ 0,00</span></div>
<div class="bx" style="left:284px;top:265px;width:63px;height:21px;background:#dcdcdc"><span style="right:2px;color:#000;letter-spacing:-0.21px">R$0,00</span></div>
<div class="t" style="left:0;width:116px;text-align:right;top:290px;letter-spacing:-0.31px">Valor TEP</div>
<div class="bx" style="left:132px;top:286px;width:63px;height:21px;background:#dcdcdc"><span style="right:2px;color:#000080;letter-spacing:-0.21px">R$0,00</span></div>
<div class="bx" style="left:208px;top:286px;width:63px;height:21px;background:#f0f0f0"><span style="right:2px;color:#000080;letter-spacing:-0.2px">R$ 0,00</span></div>
<div class="bx" style="left:284px;top:286px;width:63px;height:21px;background:#dcdcdc"><span style="right:2px;color:#000;letter-spacing:-0.21px">R$0,00</span></div>
<div class="t" style="left:0;width:116px;text-align:right;top:311px;letter-spacing:-0.31px">Valor TFB</div>
<div class="bx" style="left:132px;top:307px;width:63px;height:21px;background:#dcdcdc"><span style="right:2px;color:#000080;letter-spacing:-0.21px">R$0,00</span></div>
<div class="bx" style="left:208px;top:307px;width:63px;height:21px;background:#f0f0f0"><span style="right:2px;color:#000080;letter-spacing:-0.2px">R$ 0,00</span></div>
<div class="bx" style="left:284px;top:307px;width:63px;height:21px;background:#dcdcdc"><span style="right:2px;color:#000;letter-spacing:-0.21px">R$0,00</span></div>
<div class="t" style="left:0;width:116px;text-align:right;top:332px;letter-spacing:-0.31px">Valor TAS</div>
<div class="bx" style="left:132px;top:328px;width:63px;height:21px;background:#dcdcdc"><span style="right:2px;color:#000080;letter-spacing:-0.21px">R$3,64</span></div>
<div class="bx" style="left:208px;top:328px;width:63px;height:21px;background:#f0f0f0"><span style="right:2px;color:#000080;letter-spacing:-0.2px">R$ 0,49</span></div>
<div class="bx" style="left:284px;top:328px;width:63px;height:21px;background:#dcdcdc"><span style="right:2px;color:#000;letter-spacing:-0.21px">R$4,14</span></div>
<div class="t" style="left:0;width:116px;text-align:right;top:353px;letter-spacing:-0.31px">Valor TCE</div>
<div class="bx" style="left:132px;top:349px;width:63px;height:21px;background:#dcdcdc"><span style="right:2px;color:#000080;letter-spacing:-0.21px">R$0,00</span></div>
<div class="bx" style="left:208px;top:349px;width:63px;height:21px;background:#f0f0f0"><span style="right:2px;color:#000080;letter-spacing:-0.2px">R$ 0,00</span></div>
<div class="bx" style="left:284px;top:349px;width:63px;height:21px;background:#dcdcdc"><span style="right:2px;color:#000;letter-spacing:-0.21px">R$0,00</span></div>
<div class="t" style="left:0;width:116px;text-align:right;top:374px;letter-spacing:-0.31px">Valor TDC</div>
<div class="bx" style="left:132px;top:370px;width:63px;height:21px;background:#dcdcdc"><span style="right:2px;color:#000080;letter-spacing:-0.21px">R$0,00</span></div>
<div class="bx" style="left:208px;top:370px;width:63px;height:21px;background:#f0f0f0"><span style="right:2px;color:#000080;letter-spacing:-0.2px">R$ 0,00</span></div>
<div class="bx" style="left:284px;top:370px;width:63px;height:21px;background:#dcdcdc"><span style="right:2px;color:#000;letter-spacing:-0.21px">R$0,00</span></div>
<div class="t" style="left:0;width:116px;text-align:right;top:395px;letter-spacing:-0.31px">Valor TDA</div>
<div class="bx" style="left:132px;top:391px;width:63px;height:21px;background:#dcdcdc"><span style="right:2px;color:#000080;letter-spacing:-0.19px">R$408,24</span></div>
<div class="bx" style="left:208px;top:391px;width:63px;height:21px;background:#f0f0f0"><span style="right:2px;color:#000080;letter-spacing:-0.19px">R$ 55,66</span></div>
<div class="bx" style="left:284px;top:391px;width:63px;height:21px;background:#dcdcdc"><span style="right:2px;color:#000;letter-spacing:-0.19px">R$463,91</span></div>
<div class="t" style="left:0;width:116px;text-align:right;top:416px;letter-spacing:-0.31px">Valor TDE</div>
<div class="bx" style="left:132px;top:412px;width:63px;height:21px;background:#dcdcdc"><span style="right:2px;color:#000080;letter-spacing:-0.21px">R$0,00</span></div>
<div class="bx" style="left:208px;top:412px;width:63px;height:21px;background:#f0f0f0"><span style="right:2px;color:#000080;letter-spacing:-0.2px">R$ 0,00</span></div>
<div class="bx" style="left:284px;top:412px;width:63px;height:21px;background:#dcdcdc"><span style="right:2px;color:#000;letter-spacing:-0.21px">R$0,00</span></div>
<div class="t" style="left:0;width:116px;text-align:right;top:437px;letter-spacing:-0.31px">Valor TRT</div>
<div class="bx" style="left:132px;top:433px;width:63px;height:21px;background:#dcdcdc"><span style="right:2px;color:#000080;letter-spacing:-0.21px">R$0,00</span></div>
<div class="bx" style="left:208px;top:433px;width:63px;height:21px;background:#f0f0f0"><span style="right:2px;color:#000080;letter-spacing:-0.2px">R$ 0,00</span></div>
<div class="bx" style="left:284px;top:433px;width:63px;height:21px;background:#dcdcdc"><span style="right:2px;color:#000;letter-spacing:-0.21px">R$0,00</span></div>
<div class="t" style="left:0;width:116px;text-align:right;top:458px;letter-spacing:-0.31px">Valor TAG</div>
<div class="bx" style="left:132px;top:454px;width:63px;height:21px;background:#dcdcdc"><span style="right:2px;color:#000080;letter-spacing:-0.21px">R$0,00</span></div>
<div class="bx" style="left:208px;top:454px;width:63px;height:21px;background:#f0f0f0"><span style="right:2px;color:#000080;letter-spacing:-0.2px">R$ 0,00</span></div>
<div class="bx" style="left:284px;top:454px;width:63px;height:21px;background:#dcdcdc"><span style="right:2px;color:#000;letter-spacing:-0.21px">R$0,00</span></div>
</div>
<div class="t " style="top:531.4px;left:81px;width:400px;text-align:right;letter-spacing:-0.19px;">Valor da Prestação</div>
<div class="bx" style="left:485px;top:529px;width:92px;height:21px;background:#f0f0f0;"><span style="right:2px;color:#000;margin-top:0px;letter-spacing:-0.18px">R$1.391,53</span></div>
<div class="t " style="top:554.4px;left:81px;width:400px;text-align:right;letter-spacing:-0.19px;">Nat. de Operação</div>
<div class="bx" style="left:485px;top:552px;width:42px;height:21px;background:#f0f0f0;"><span style="left:1px;color:#000;margin-top:0px;letter-spacing:-0.15px">571220</span></div>
<div class="bx" style="left:529px;top:552px;width:125px;height:22px;background:#f0f0f0;"><span style="left:2px;color:#6d6d6d;margin-top:0px;letter-spacing:-0.22px">Prest Serv Transp a N</span></div>
<div class="dd dis" style="left:635px;top:554px;height:18px"></div>
<div class="t " style="top:576.4px;left:81px;width:400px;text-align:right;letter-spacing:-0.2px;">Código. Prest.Serviço</div>
<div class="bx" style="left:485px;top:574px;width:42px;height:21px;background:#dcdcdc;"></div>
<div class="bx" style="left:528px;top:574px;width:125px;height:22px;background:#dcdcdc;"></div>
<div class="dd dis" style="left:634px;top:576px;height:18px"></div>
<div class="t " style="top:600px;left:81px;width:400px;text-align:right;letter-spacing:-0.29px;">Nat. de Ope DIFAL</div>
<div class="bx" style="left:485px;top:596px;width:42px;height:21px;background:#dcdcdc;"><span style="left:1px;color:#000;margin-top:0px;letter-spacing:-0.15px">571723</span></div>
<div class="bx" style="left:528px;top:596px;width:125px;height:22px;background:#dcdcdc;"><span style="left:2px;color:#6d6d6d;margin-top:0px;letter-spacing:-0.48px">NATUREZA DIFAL</span></div>
<div class="dd dis" style="left:634px;top:598px;height:18px"></div>
<div class="t " style="top:622.4px;left:81px;width:400px;text-align:right;letter-spacing:-0.4px;">N° GNRE</div>
<div class="bx" style="left:485px;top:619px;width:109px;height:21px;background:#fff;"><span style="left:1.3px;color:#000;margin-top:0px;letter-spacing:-0.15px">14526</span></div>
<div class="t " style="top:645.4px;left:81px;width:400px;text-align:right;letter-spacing:-0.38px;">% ICMS</div>
<div class="bx" style="left:485px;top:642px;width:109px;height:21px;background:#dcdcdc;"><span style="right:2px;color:#000;margin-top:0px;letter-spacing:-0.15px">12,00%</span></div>
<div class="t " style="top:668.2px;left:81px;width:400px;text-align:right;letter-spacing:-0.28px;">% Red. Base ICMS</div>
<div class="bx" style="left:485px;top:665px;width:109px;height:21px;background:#f0f0f0;"><span style="right:2px;color:#000;margin-top:0px;letter-spacing:-0.15px">0</span></div>
<div class="t " style="top:691px;left:81px;width:400px;text-align:right;letter-spacing:-0.3px;">Tipo de ICMS</div>
<div class="bx" style="left:485px;top:688px;width:109px;height:22px;background:#f0f0f0;"><span style="left:2px;color:#6d6d6d;margin-top:0px;letter-spacing:-0.21px">Normal</span></div>
<div class="dd dis" style="left:575px;top:690px;height:18px"></div>
<div class="t " style="top:714.1px;left:81px;width:400px;text-align:right;letter-spacing:-0.2px;">Base de Cálculo</div>
<div class="bx" style="left:485px;top:711px;width:109px;height:21px;background:#f0f0f0;"><span style="right:2px;color:#000;margin-top:0px;letter-spacing:-0.18px">R$1.390,08</span></div>
<div class="t " style="top:736.4px;left:81px;width:400px;text-align:right;letter-spacing:-0.33px;">Valor ICMS</div>
<div class="bx" style="left:485px;top:733px;width:109px;height:21px;background:#f0f0f0;"><span style="right:2px;color:#000;margin-top:0px;letter-spacing:-0.19px">R$166,81</span></div>
<div class="t " style="top:758.4px;left:81px;width:400px;text-align:right;letter-spacing:-0.27px;">Crédito Pres. ICMS</div>
<div class="bx" style="left:485px;top:755px;width:109px;height:21px;background:#f0f0f0;"><span style="right:2px;color:#000;margin-top:0px;letter-spacing:-0.15px">0,00</span></div>
<div class="t " style="top:779.4px;left:81px;width:400px;text-align:right;letter-spacing:-0.31px;">Valor ISS</div>
<div class="bx" style="left:485px;top:777px;width:109px;height:21px;background:#f0f0f0;"></div>
<div class="t " style="top:801.4px;left:81px;width:400px;text-align:right;letter-spacing:-0.33px;">Valor IRRF</div>
<div class="bx" style="left:485px;top:798px;width:109px;height:21px;background:#dcdcdc;"></div>
<div class="t " style="top:823.4px;left:81px;width:400px;text-align:right;letter-spacing:-0.2px;">Valor Líquido</div>
<div class="bx" style="left:485px;top:820px;width:109px;height:21px;background:#f0f0f0;"><span style="right:2px;color:#000;margin-top:0px;letter-spacing:-0.18px">R$1.391,53</span></div>
<div class="t " style="top:847.4px;left:81px;width:400px;text-align:right;letter-spacing:-0.27px;">% ICMS Destino</div>
<div class="bx" style="left:485px;top:844px;width:109px;height:21px;background:#dcdcdc;"><span style="right:2px;color:#000;margin-top:0px;letter-spacing:-0.15px">0,00%</span></div>
<div class="t " style="top:868px;left:81px;width:400px;text-align:right;letter-spacing:-0.37px;">Valor ICMS DIFAL</div>
<div class="bx" style="left:485px;top:866px;width:109px;height:21px;background:#dcdcdc;"></div>
<div class="t " style="top:891px;left:81px;width:400px;text-align:right;letter-spacing:-0.33px;">Valor ICMS DIFAL Orig</div>
<div class="bx" style="left:485px;top:888px;width:109px;height:21px;background:#dcdcdc;"></div>
<div class="t " style="top:914px;left:81px;width:400px;text-align:right;letter-spacing:-0.33px;">Valor ICMS DIFAL Dest</div>
<div class="bx" style="left:485px;top:911px;width:109px;height:21px;background:#dcdcdc;"></div>
<div class="t " style="top:936px;left:81px;width:400px;text-align:right;letter-spacing:-0.31px;">Valor FCP</div>
<div class="bx" style="left:485px;top:934px;width:109px;height:21px;background:#dcdcdc;"></div>
<div class="t " style="top:779px;left:242.70000000000005px;width:400px;text-align:right;letter-spacing:-0.36px;">% ISS</div>
<div class="bx" style="left:646px;top:776px;width:61px;height:21px;background:#f0f0f0;"></div>
<div class="t " style="top:800.9px;left:242.70000000000005px;width:400px;text-align:right;letter-spacing:-0.38px;">% IRRF</div>
<div class="bx" style="left:645px;top:798px;width:62px;height:21px;background:#dcdcdc;"></div>
<div class="t " style="top:870.8px;left:241.70000000000005px;width:400px;text-align:right;letter-spacing:-0.4px;">% DIFAL</div>
<div class="bx" style="left:645px;top:865px;width:62px;height:21px;background:#dcdcdc;"></div>
<div class="t " style="top:892.7px;left:241.70000000000005px;width:400px;text-align:right;letter-spacing:-0.21px;">% Orig</div>
<div class="bx" style="left:645px;top:889px;width:62px;height:21px;background:#dcdcdc;"><span style="right:3px;color:#000;margin-top:0px;letter-spacing:-0.15px">0,00%</span></div>
<div class="t " style="top:913.7px;left:241.70000000000005px;width:400px;text-align:right;letter-spacing:-0.21px;">% Dest</div>
<div class="bx" style="left:645px;top:911px;width:62px;height:21px;background:#dcdcdc;"><span style="right:3px;color:#000;margin-top:0px;letter-spacing:-0.15px">0,00%</span></div>
<div class="t " style="top:935.6px;left:241.70000000000005px;width:400px;text-align:right;letter-spacing:-0.36px;">% FCP</div>
<div class="bx" style="left:645px;top:933px;width:62px;height:21px;background:#dcdcdc;"><span style="right:3px;color:#000;margin-top:0px;letter-spacing:-0.15px">0,00%</span></div>
<div class="a" style="left:712px;top:564px;width:18px;height:88px;border-top:1px solid #fff;border-right:1px solid #696969;border-bottom:1px solid #696969;box-shadow:inset -1px -1px 0 #a0a0a0;background:#f0f0f0;border-radius:0 3px 3px 0"></div>
<div class="t" style="left:726.9px;top:568.5px;transform-origin:0 0;transform:rotate(90deg);letter-spacing:-0.03px">LOG do Cálculo</div>
<div class="a" style="left:712px;top:653px;width:18px;height:80px;border-top:1px solid #fff;border-right:1px solid #696969;border-bottom:1px solid #696969;box-shadow:inset -1px -1px 0 #a0a0a0;background:#f0f0f0;border-radius:0 3px 3px 0"></div>
<div class="t" style="left:726.9px;top:658.3px;transform-origin:0 0;transform:rotate(90deg);letter-spacing:-0.03px">Vl. Calculados</div>
<div class="a" style="left:712px;top:734px;width:18px;height:41px;border-top:1px solid #fff;border-right:1px solid #696969;border-bottom:1px solid #696969;box-shadow:inset -1px -1px 0 #a0a0a0;background:#f0f0f0;border-radius:0 3px 3px 0"></div>
<div class="t" style="left:726.9px;top:739.6px;transform-origin:0 0;transform:rotate(90deg);letter-spacing:-0.03px">Obs</div>
<div class="a" style="left:710px;top:519px;width:22px;height:45px;border-right:1px solid #696969;border-bottom:1px solid #696969;box-shadow:inset -1px -1px 0 #a0a0a0;background:#f0f0f0;border-radius:0 3px 3px 0"></div>
<div class="t" style="left:729.4px;top:524px;transform-origin:0 0;transform:rotate(90deg);letter-spacing:-0.03px">Dados</div>
<div class="a" style="left:0;top:986px;width:1147px;height:1px;background:#e3e3e3"></div>
<div class="a" style="left:0;top:987px;width:1147px;height:1px;background:#fff"></div>
<div class="a" style="left:0;top:988px;width:1147px;height:2px;background:#f7f7f7"></div>
<div class="a" style="left:0;top:990px;width:1147px;height:1px;background:#b0b0b0"></div>
<div class="a" style="left:0;top:991px;width:1147px;height:1px;background:#696969"></div>
<div class="a" style="left:0;top:992px;width:1147px;height:1px;background:#6f8fb8"></div>
<div class="a" style="left:0;top:993px;width:1147px;height:1px;background:#f3f8fe"></div>
<div class="a" style="left:0;top:994px;width:1147px;height:3px;background:#e6effa"></div>
<div class="a" style="left:147px;top:993px;width:1px;height:4px;background:#c3d4ec"></div>
</body></html>
